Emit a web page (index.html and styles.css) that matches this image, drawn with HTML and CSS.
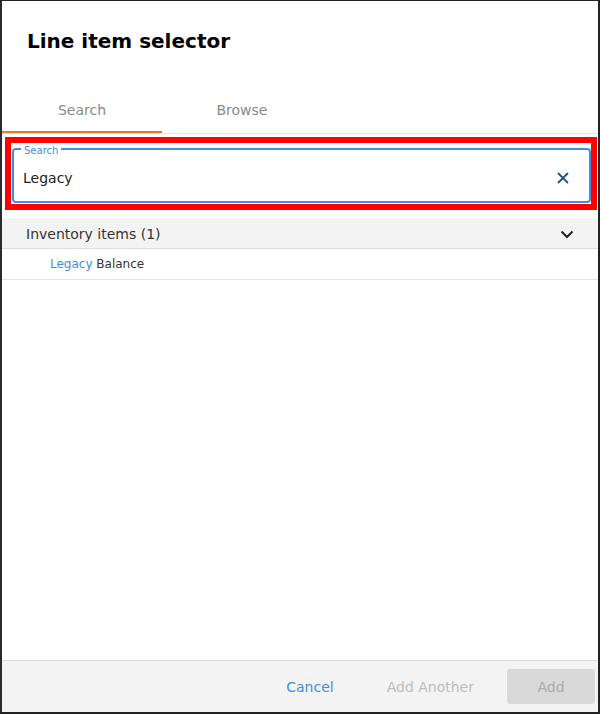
FILE: index.html
```html
<!DOCTYPE html>
<html lang="en">
<head>
  <meta charset="UTF-8" />
  <meta name="viewport" content="width=device-width, initial-scale=1.0" />
  <title>Line item selector</title>
  <link rel="stylesheet" href="styles.css">
</head>
<body>

<div class="dialog">
  <h1 class="dialog-title">Line item selector</h1>

  <div class="tabs">
    <div class="tab active">Search</div>
    <div class="tab">Browse</div>
  </div>

  <div class="highlight">
    <div class="search-field">
      <span class="search-label">Search</span>
      <input type="text" class="search-input" value="Legacy" />
      <button class="clear-button" aria-label="Clear">
        <svg width="12" height="12" viewBox="0 0 12 12"><path d="M1 1 L11 11 M11 1 L1 11" stroke="#1f5283" stroke-width="1.8" fill="none"/></svg>
      </button>
    </div>
  </div>

  <div class="results">
    <div class="group-header">
      <span>Inventory items (1)</span>
      <svg width="14" height="9" viewBox="0 0 14 9"><path d="M1.5 1.5 L7 7 L12.5 1.5" stroke="#222" stroke-width="2" fill="none"/></svg>
    </div>
    <div class="result-row"><span class="match">Legacy</span> Balance</div>
  </div>

  <!-- footer actions -->
  <div class="dialog-footer">
    <button class="text-button">Cancel</button>
    <button class="text-button disabled">Add Another</button>
    <button class="add-button">Add</button>
  </div>
</div>

</body>
</html>
```

FILE: styles.css
```css
* {
  box-sizing: border-box;
}
body {
  margin: 0;
  background: #222;
  font-family: "DejaVu Sans", Verdana, sans-serif;
}
.dialog {
  height: 714px;
  border-top: 1px solid #222;
  border-left: 2px solid #2a2a2a;
  border-right: 2px solid #222;
  border-bottom: 2px solid #222;
  background: #fff;
  display: flex;
  flex-direction: column;
}
.dialog-title {
  margin: 0;
  padding: 26px 25px 0;
  height: 90px;
  font-size: 20px;
  line-height: 28px;
  font-weight: bold;
  color: #000;
}

/* tabs */
.tabs {
  display: flex;
  border-bottom: 1px solid #e2e2e2;
}
.tab {
  width: 160px;
  height: 42px;
  line-height: 38px;
  text-align: center;
  font-size: 14px;
  color: #8a8a8a;
  border-bottom: 2px solid transparent;
}
.tab.active {
  border-bottom-color: #ee7a1f;
}

/* red box around the search field */
.highlight {
  margin: 3px 1px 0 3px;
  border: 6px solid #ff0000;
  padding: 5px 0 1px 1px;
}
.search-field {
  position: relative;
  display: flex;
  align-items: center;
  height: 55px;
  border: 2px solid #3d8fe4;
  border-radius: 4px;
  padding: 0 20px 0 9px;
}
.search-label {
  position: absolute;
  top: -5px;
  left: 7px;
  padding: 0 3px;
  background: #fff;
  font-size: 10px;
  line-height: 11px;
  color: #3d8fe4;
}
.search-input {
  flex: 1;
  border: none;
  outline: none;
  padding: 4px 0 0;
  font-family: inherit;
  font-size: 14px;
  color: #222;
}
.clear-button {
  border: none;
  background: none;
  padding: 4px 0 0;
  display: flex;
}

/* results */
.results {
  flex: 1;
  margin-top: 8px;
}
.group-header {
  display: flex;
  justify-content: space-between;
  align-items: center;
  height: 31px;
  padding: 2px 24px 0 24px;
  background: #f3f3f3;
  border-bottom: 1px solid #dcdcdc;
  font-size: 14px;
  color: #333;
}
.result-row {
  height: 31px;
  line-height: 30px;
  padding-left: 48px;
  border-bottom: 1px solid #e4e4e4;
  font-size: 12px;
  color: #333;
}
.match {
  color: #3d8fe4;
}

.dialog-footer {
  display: flex;
  justify-content: flex-end;
  align-items: center;
  height: 52px;
  padding: 0 3px 0 0;
  background: #f3f3f3;
  border-top: 1px solid #dadada;
}
.text-button {
  border: none;
  background: none;
  padding: 0 16px;
  font-family: inherit;
  font-size: 14px;
  color: #3d8fe4;
  cursor: pointer;
}
.text-button.disabled {
  color: #bdbdbd;
  margin-left: 21px;
  margin-right: 17px;
}
.add-button {
  width: 88px;
  height: 35px;
  border: none;
  border-radius: 3px;
  background: #d9d9d9;
  font-family: inherit;
  font-size: 14px;
  color: #ababab;
}
```
